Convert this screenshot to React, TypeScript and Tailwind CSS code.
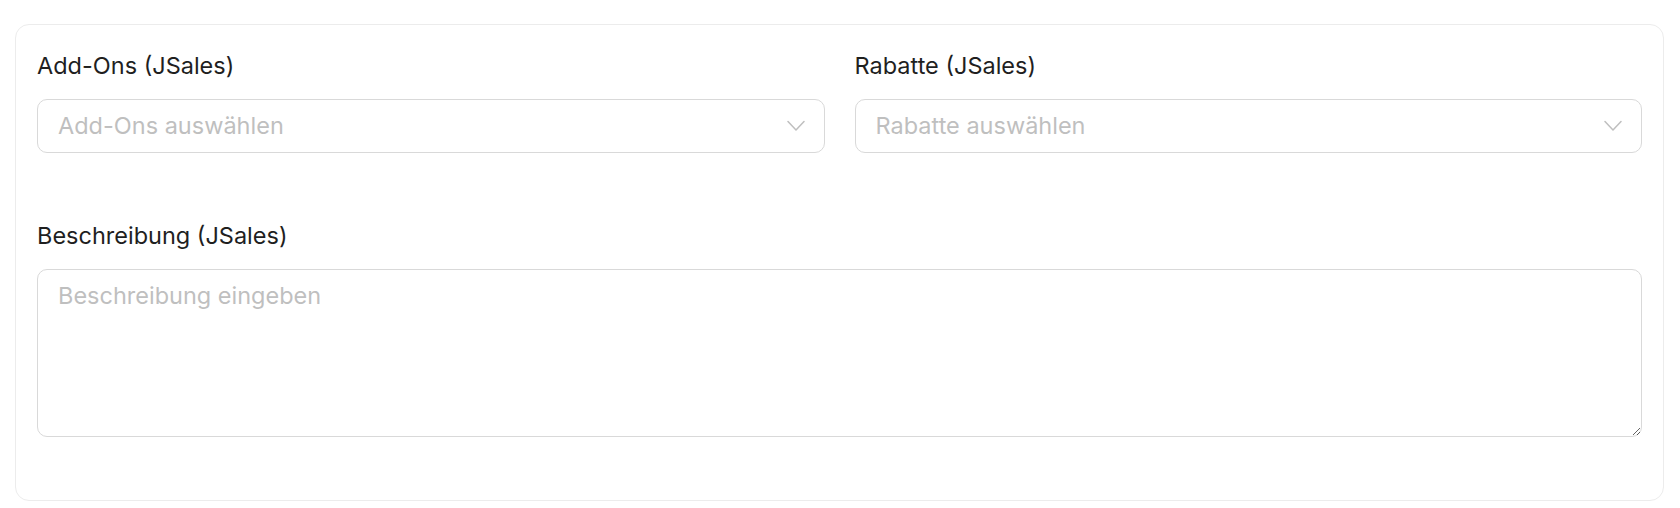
import React from "react";

function Chevron() {
  return (
    <svg width="18" height="12" viewBox="0 0 18 12" fill="none" className="shrink-0">
      <polyline points="1,1.5 9,10 17,1.5" stroke="#bfbfbf" strokeWidth="1.5" strokeLinejoin="round" strokeLinecap="round" />
    </svg>
  );
}

function SelectField({ label, placeholder }: { label: string; placeholder: string }) {
  return (
    <div className="flex flex-col">
      <label className="text-[23.5px] leading-[32px] text-[#1f1f1f]">{label}</label>
      <div className="mt-[17px] flex h-[54px] items-center justify-between rounded-[10px] border border-[#d9d9d9] bg-white pl-[20px] pr-[19px]">
        <span className="text-[23.5px] text-[#bfbfbf]">{placeholder}</span>
        <Chevron />
      </div>
    </div>
  );
}

export default function App() {
  return (
    <div
      className="min-h-[508px] bg-white pl-[15px] pr-[16px] pt-[24px]"
      style={{ fontFamily: "Inter, 'Noto Sans', sans-serif" }}
    >
      <div className="rounded-[14px] border border-[#ececec] bg-white px-[21px] pb-[63px] pt-[25px]">
        <div className="grid grid-cols-2 gap-[30px]">
          <SelectField label="Add-Ons (JSales)" placeholder="Add-Ons auswählen" />
          <SelectField label="Rabatte (JSales)" placeholder="Rabatte auswählen" />
        </div>

        <div className="mt-[67px] flex flex-col">
          <label className="text-[23.5px] leading-[32px] text-[#1f1f1f]">Beschreibung (JSales)</label>
          <textarea
            placeholder="Beschreibung eingeben"
            className="mt-[17px] block h-[168px] w-full rounded-[10px] border border-[#d9d9d9] bg-white px-[20px] pb-[8px] pt-[10px] text-[23.5px] leading-[32px] text-[#1f1f1f] outline-none placeholder:text-[#bfbfbf]"
          />
        </div>
      </div>
    </div>
  );
}
